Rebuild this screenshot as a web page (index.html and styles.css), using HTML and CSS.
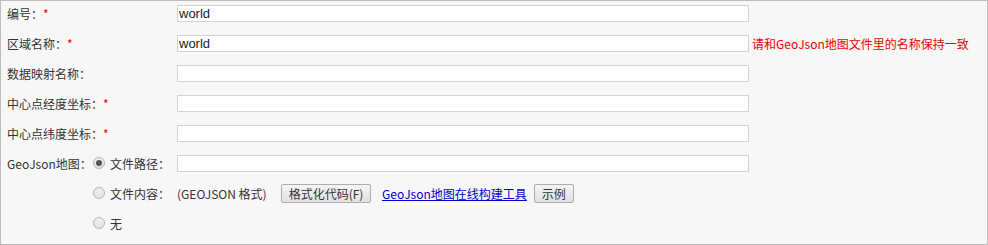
FILE: index.html
```html
<!DOCTYPE html>
<html lang="zh-CN">
<head>
  <meta charset="UTF-8" />
  <title>区域编辑</title>
  <link rel="stylesheet" href="styles.css">
</head>
<body>

<div class="panel">
  <div class="row">
    <label class="label">编号：<span class="req">*</span></label>
    <input class="text" type="text" value="world">
  </div>

  <div class="row">
    <label class="label">区域名称：<span class="req">*</span></label>
    <input class="text" type="text" value="world">
    <span class="tip">请和GeoJson地图文件里的名称保持一致</span>
  </div>

  <div class="row">
    <label class="label">数据映射名称：</label>
    <input class="text" type="text">
  </div>

  <div class="row">
    <label class="label">中心点经度坐标：<span class="req">*</span></label>
    <input class="text" type="text">
  </div>

  <div class="row">
    <label class="label">中心点纬度坐标：<span class="req">*</span></label>
    <input class="text" type="text">
  </div>

  <div class="row">
    <span class="label-short">GeoJson地图：</span>
    <label class="option"><input class="radio" type="radio" name="src" checked> 文件路径：</label>
    <input class="text" type="text">
  </div>

  <div class="row sub">
    <label class="option"><input class="radio" type="radio" name="src"> 文件内容：</label>
    <span class="hint">(GEOJSON 格式)</span>
    <button class="btn fmt">格式化代码(F)</button>
    <a class="link" href="#">GeoJson地图在线构建工具</a>
    <button class="btn">示例</button>
  </div>

  <div class="row sub">
    <label class="option"><input class="radio" type="radio" name="src"> 无</label>
  </div>
</div>

</body>
</html>
```

FILE: styles.css
```css
html, body {
  margin: 0;
  padding: 0;
}
body {
  font-family: "Noto Sans CJK SC", "Microsoft YaHei", sans-serif;
  font-size: 12px;
  color: #333;
  background: #fff;
}
.panel {
  box-sizing: border-box;
  width: 988px;
  height: 245px;
  border: 1px solid #bdbdbd;
  background: #f7f7f7;
  padding: 1px 0 0 6px;
  display: flex;
  flex-direction: column;
  gap: 8px;
}
.row {
  display: flex;
  align-items: center;
  height: 22px;
  white-space: nowrap;
}
.label {
  width: 170px;
  flex: none;
}
.label-short {
  width: 84px;
  flex: none;
}
.req {
  color: #e00;
}
.sub {
  padding-left: 84px;
}
.option {
  width: 86px;
  flex: none;
  display: flex;
  align-items: center;
}
.radio {
  appearance: none;
  -webkit-appearance: none;
  width: 12px;
  height: 12px;
  margin: 0 5px 0 2px;
  border: 1px solid #b4b4b4;
  border-radius: 50%;
  background: linear-gradient(#f0f0f0, #e2e2e2);
  box-sizing: border-box;
  position: relative;
}
.radio:checked::after {
  content: "";
  position: absolute;
  left: 2px;
  top: 2px;
  width: 6px;
  height: 6px;
  border-radius: 50%;
  background: #555;
}
.text {
  box-sizing: border-box;
  width: 572px;
  height: 17px;
  margin: 0;
  padding: 0 1px;
  border: 1px solid #d4d4d4;
  background: #fff;
  font-family: "Liberation Sans", Arial, sans-serif;
  font-size: 13px;
  color: #222;
  outline: none;
}
.tip {
  color: #e00;
  margin-left: 3px;
}
.hint {
  width: 104px;
  flex: none;
}
.btn {
  box-sizing: border-box;
  height: 19px;
  padding: 0 7px;
  border: 1px solid #adadad;
  border-radius: 2px;
  background: linear-gradient(#f4f4f4, #e1e1e1);
  font-family: inherit;
  font-size: 12px;
  color: #333;
  line-height: 17px;
}
.fmt {
  width: 90px;
  padding: 0;
}
.link {
  color: #00c;
  margin: 0 7px 0 11px;
}
```
